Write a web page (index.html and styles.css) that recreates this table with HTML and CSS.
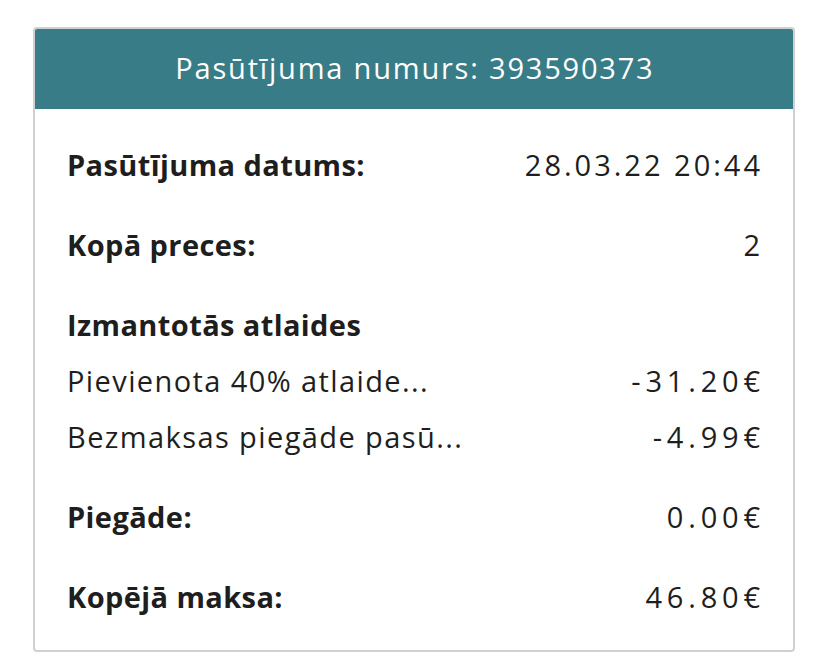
FILE: index.html
```html
<!DOCTYPE html>
<html lang="lv">
<head>
<meta charset="utf-8">
<link rel="stylesheet" href="styles.css">
</head>
<body>
<div class="card">
  <div class="card-header"><span class="title">Pasūtījuma numurs: 393590373</span></div>
  <div class="card-body">
    <div class="row"><span class="label">Pasūtījuma datums:</span><span class="value">28.03.22 20:44</span></div>
    <div class="row"><span class="label">Kopā preces:</span><span class="value">2</span></div>
    <div class="group">
      <div class="row"><span class="label">Izmantotās atlaides</span></div>
      <div class="row"><span class="item">Pievienota 40% atlaide...</span><span class="value money">-31.20€</span></div>
      <div class="row"><span class="item">Bezmaksas piegāde pasū...</span><span class="value money">-4.99€</span></div>
    </div>
    <div class="row"><span class="label">Piegāde:</span><span class="value money">0.00€</span></div>
    <div class="row"><span class="label">Kopējā maksa:</span><span class="value money">46.80€</span></div>
  </div>
</div>
</body>
</html>
```
FILE: styles.css
```css
html, body { margin: 0; padding: 0; background: #fff; }
body {
  padding: 27px 33px;
  font-family: "Open Sans", Lato, sans-serif;
  color: #1e1e1e;
}
.card {
  width: 762px;
  height: 625px;
  box-sizing: border-box;
  border: 2px solid #d0d0d0;
  border-radius: 4px;
  overflow: hidden;
}
.card-header {
  height: 80px;
  background: #387c87;
  color: #fff;
  display: flex;
  align-items: center;
  justify-content: center;
  padding-bottom: 3px;
  box-sizing: border-box;
}
.title {
  font-size: 29px;
  letter-spacing: 1.8px;
  margin-right: -1.8px;
}
.card-body {
  padding: 27px 33px 0 32px;
  display: flex;
  flex-direction: column;
  gap: 24px;
}
.row {
  height: 56px;
  display: flex;
  align-items: center;
  justify-content: space-between;
  font-size: 29px;
}
.label { font-weight: 700; letter-spacing: 0.4px; }
.item { font-weight: 400; letter-spacing: 1.4px; }
.value {
  font-weight: 400;
  letter-spacing: 3px;
  margin-right: -3px;
}
.value.money {
  letter-spacing: 4.8px;
  margin-right: -4.8px;
}
.group { display: flex; flex-direction: column; }
```
